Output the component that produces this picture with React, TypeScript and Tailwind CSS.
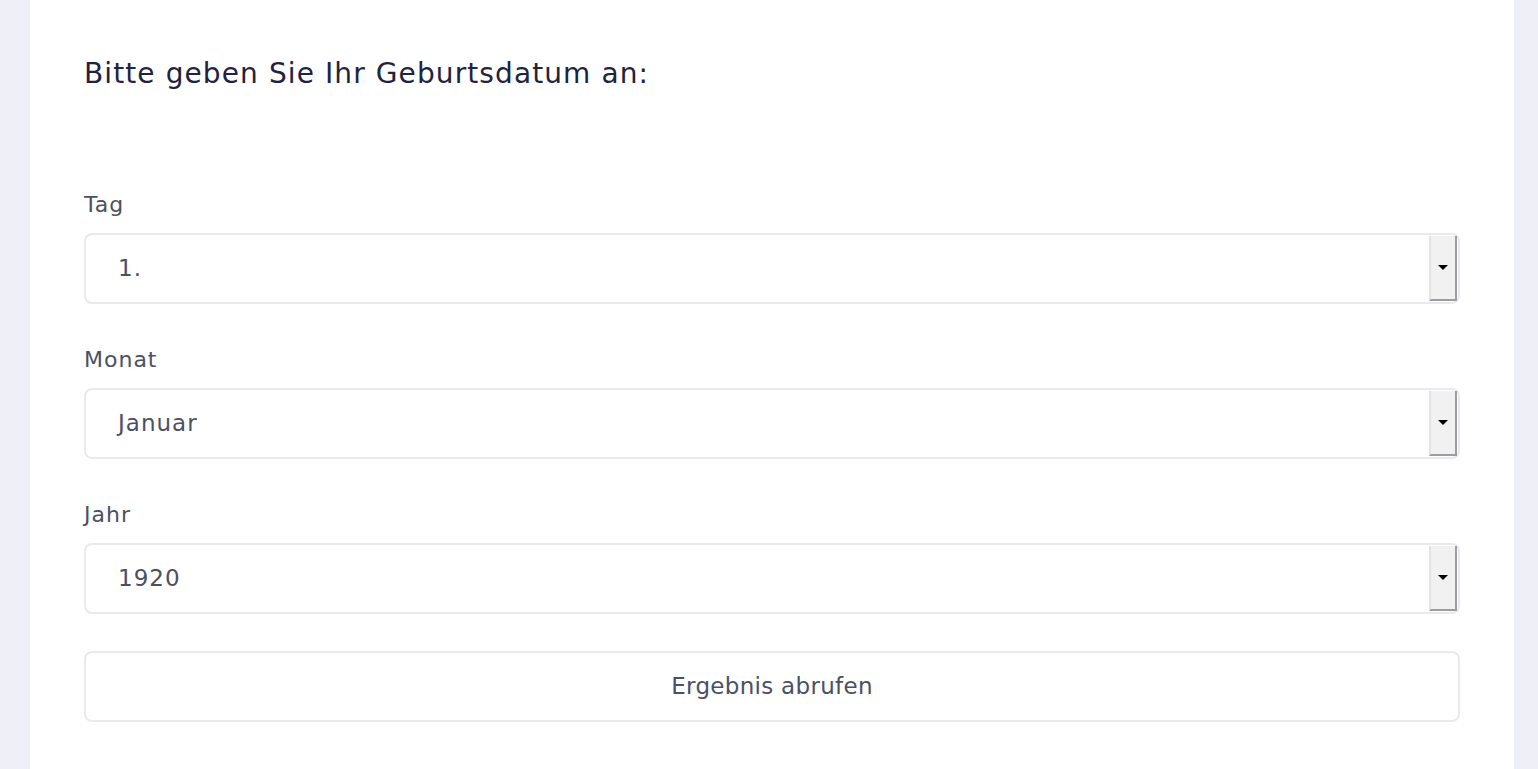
const fields = [
  { label: "Tag", value: "1." },
  { label: "Monat", value: "Januar" },
  { label: "Jahr", value: "1920" },
]

function SelectBox({ value }: { value: string }) {
  return (
    <div className="flex h-[71px] items-stretch rounded-[8px] border-2 border-[#e8eaf0] bg-white">
      <div className="flex flex-1 items-center pl-[32px] text-[23px] tracking-[1px] text-[#4b5065]">{value}</div>
      <div className="my-[1px] mr-[1px] flex w-[28px] items-center justify-center border-l-2 border-l-[#e3e3e3] border-r-2 border-r-[#9d9d9d] border-b-2 border-b-[#9d9d9d] bg-[#f1f1f1]">
        <div className="h-0 w-0 border-x-[5px] border-t-[5px] border-x-transparent border-t-black" />
      </div>
    </div>
  )
}

export default function App() {
  return (
    <div className="flex min-h-[769px] bg-[#eff0f7] pr-[24px] pl-[30px] font-['DejaVu_Sans',sans-serif]">
      <div className="flex-1 bg-white px-[54px] pt-[52px] pb-[48px]">
        <h1 className="text-[28px] leading-[44px] font-normal tracking-[1.1px] text-[#1f2340]">
          Bitte geben Sie Ihr Geburtsdatum an:
        </h1>
        <div className="mt-[94px] flex flex-col gap-[41px]">
          {fields.map(f => (
            <div key={f.label}>
              <div className="mb-[13px] text-[22px] leading-[30px] tracking-[1px] text-[#4b5065]">{f.label}</div>
              <SelectBox value={f.value} />
            </div>
          ))}
          <button className="-mt-[4px] h-[71px] rounded-[8px] border-2 border-[#e8eaf0] bg-white text-[23px] tracking-[0.3px] text-[#4b5065]">
            Ergebnis abrufen
          </button>
        </div>
      </div>
    </div>
  )
}
